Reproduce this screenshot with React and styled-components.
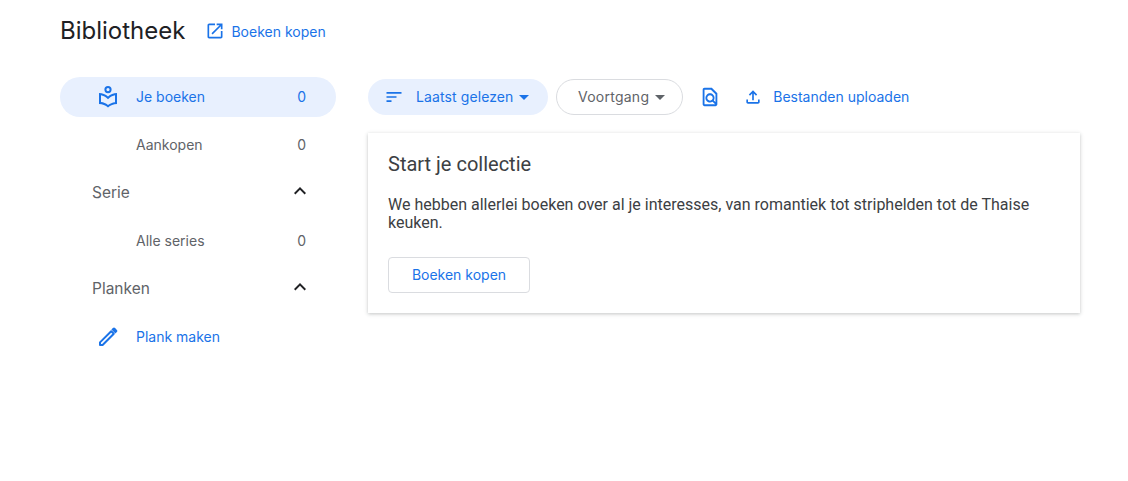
import React from "react";
import styled, { createGlobalStyle } from "styled-components";

const BLUE = "#1a73e8";
const TEXT = "#5f6368";

const GlobalStyle = createGlobalStyle`
  html, body {
    margin: 0;
    background: #fff;
    font-family: Inter, "Noto Sans", sans-serif;
  }
`;

const Icon = ({ size = 24, color = "currentColor", children }) => (
  <svg width={size} height={size} viewBox="0 0 24 24" fill={color}>
    {children}
  </svg>
);

const Caret = styled.span`
  width: 0;
  height: 0;
  border-left: 5px solid transparent;
  border-right: 5px solid transparent;
  border-top: 5px solid currentColor;
`;

const App = () => (
  <Page>
    <GlobalStyle />
    <Header>
      <Title>Bibliotheek</Title>
      <BuyLink>
        <Icon size={20}>
          <path d="M19 19H5V5h7V3H5c-1.11 0-2 .9-2 2v14c0 1.1.89 2 2 2h14c1.1 0 2-.9 2-2v-7h-2v7zM14 3v2h3.59l-9.83 9.83 1.41 1.41L19 6.41V10h2V3h-7z" />
        </Icon>
        Boeken kopen
      </BuyLink>
    </Header>
    <Columns>
      <Sidebar>
        <NavRow $active>
          <NavIcon>
            <Icon>
              <circle cx="12" cy="4.6" r="2.6" fill="none" stroke={BLUE} strokeWidth="2" />
              <path d="M12 11.55C9.64 9.35 6.48 8 3 8v11c3.48 0 6.64 1.35 9 3.55 2.36-2.19 5.52-3.55 9-3.55V8c-3.48 0-6.64 1.35-9 3.55zm7 5.58c-2.53.34-4.93 1.3-7 2.82-2.06-1.52-4.47-2.49-7-2.83v-6.95c2.1.38 4.05 1.35 5.64 2.83L12 14.28l1.36-1.27c1.59-1.48 3.54-2.45 5.64-2.83v6.95z" />
            </Icon>
          </NavIcon>
          <NavLabel>Je boeken</NavLabel>
          <Count>0</Count>
        </NavRow>
        <NavRow>
          <NavIcon />
          <NavLabel>Aankopen</NavLabel>
          <Count>0</Count>
        </NavRow>
        <SectionRow>
          <SectionLabel>Serie</SectionLabel>
          <Chevron />
        </SectionRow>
        <NavRow>
          <NavIcon />
          <NavLabel>Alle series</NavLabel>
          <Count>0</Count>
        </NavRow>
        <SectionRow>
          <SectionLabel>Planken</SectionLabel>
          <Chevron />
        </SectionRow>
        <NavRow $link>
          <NavIcon>
            <Icon>
              <path d="M4 20v-2.6L15.2 6.2l2.6 2.6L6.6 20z" fill="none" stroke={BLUE} strokeWidth="2" strokeLinejoin="round" />
              <path d="M15.4 4.6l1.5-1.5a1.6 1.6 0 0 1 2.2 0l1.8 1.8a1.6 1.6 0 0 1 0 2.2l-1.5 1.5z" />
            </Icon>
          </NavIcon>
          <NavLabel>Plank maken</NavLabel>
        </NavRow>
      </Sidebar>
      <Main>
        <Toolbar>
          <SortChip>
            <Icon size={20}>
              <path d="M3 18h6v-2H3v2zM3 6v2h18V6H3zm0 7h12v-2H3v2z" />
            </Icon>
            <ChipText>Laatst gelezen</ChipText>
            <Caret />
          </SortChip>
          <FilterChip>
            <FilterText>Voortgang</FilterText>
            <Caret />
          </FilterChip>
          <IconButton>
            <Icon size={22}>
              <path d="M14 2H6c-1.1 0-1.99.9-1.99 2L4 20c0 1.1.89 2 1.99 2H18c1.1 0 2-.9 2-2V8l-6-6zM6 4h7l5 5v8.58l-1.84-1.84c1.28-1.94 1.07-4.57-.64-6.28C14.55 8.49 13.28 8 12 8c-1.28 0-2.55.49-3.53 1.46-1.95 1.95-1.95 5.11 0 7.05.97.97 2.25 1.46 3.53 1.46.96 0 1.92-.28 2.75-.83L17.6 20H6V4zm8.11 11.1c-.56.56-1.31.88-2.11.88s-1.55-.31-2.11-.88c-.56-.56-.88-1.31-.88-2.11s.31-1.55.88-2.11c.56-.57 1.31-.88 2.11-.88s1.55.31 2.11.88c.56.56.88 1.31.88 2.11s-.31 1.55-.88 2.11z" />
            </Icon>
          </IconButton>
          <UploadLink>
            <Icon size={20}>
              <path d="M18 15v3H6v-3H4v3c0 1.1.9 2 2 2h12c1.1 0 2-.9 2-2v-3h-2zM7 9l1.41 1.41L11 7.83V16h2V7.83l2.59 2.58L17 9l-5-5-5 5z" />
            </Icon>
            <UploadText>Bestanden uploaden</UploadText>
          </UploadLink>
        </Toolbar>
        <Card>
          <CardTitle>Start je collectie</CardTitle>
          <CardBody>
            We hebben allerlei boeken over al je interesses, van romantiek tot striphelden tot de Thaise keuken.
          </CardBody>
          <CardButton>Boeken kopen</CardButton>
        </Card>
      </Main>
    </Columns>
  </Page>
);

const Chevron = () => (
  <ChevronBox>
    <Icon color="#202124">
      <path d="M12 8l-6 6 1.41 1.41L12 10.83l4.59 4.58L18 14z" />
    </Icon>
  </ChevronBox>
);

const Page = styled.div`
  padding: 0 48px 0 60px;
  height: 481px;
  box-sizing: border-box;
  overflow: hidden;
`;

const Header = styled.header`
  display: flex;
  align-items: center;
  gap: 20px;
  height: 60px;
`;

const Title = styled.h1`
  margin: 0;
  font-size: 24px;
  font-weight: 400;
  color: #202124;
`;

const BuyLink = styled.a`
  display: flex;
  align-items: center;
  gap: 6px;
  margin-top: 2px;
  font-size: 14px;
  color: ${BLUE};
`;

const Columns = styled.div`
  display: flex;
  gap: 32px;
  margin-top: 17px;
`;

const Sidebar = styled.nav`
  width: 276px;
  flex: none;
  display: flex;
  flex-direction: column;
  gap: 8px;
`;

const NavRow = styled.div`
  display: flex;
  align-items: center;
  height: 40px;
  padding: 0 30px 0 36px;
  border-radius: 20px;
  font-size: 14px;
  color: ${(p) => (p.$active || p.$link ? BLUE : TEXT)};
  background: ${(p) => (p.$active ? "#e8f0fe" : "transparent")};
`;

const NavIcon = styled.span`
  width: 24px;
  height: 24px;
  margin-right: 16px;
  flex: none;
`;

const NavLabel = styled.span`
  flex: 1;
  margin-bottom: 2px;
`;

const Count = styled.span`
  margin-bottom: 2px;
`;

const SectionRow = styled.div`
  display: flex;
  align-items: center;
  justify-content: space-between;
  height: 40px;
  padding: 0 24px 0 32px;
  font-size: 15.5px;
  color: ${TEXT};
`;

const SectionLabel = styled.span`
  margin-top: -2px;
`;

const ChevronBox = styled.span`
  display: flex;
  margin-top: -4px;
`;

const Main = styled.main`
  flex: 1;
  min-width: 0;
`;

const Toolbar = styled.div`
  display: flex;
  align-items: center;
  gap: 8px;
  height: 40px;
`;

const SortChip = styled.div`
  display: flex;
  align-items: center;
  height: 36px;
  width: 180px;
  box-sizing: border-box;
  padding: 0 18px 0 16px;
  border-radius: 18px;
  background: #e8f0fe;
  font-size: 14px;
  letter-spacing: 0.1px;
  color: ${BLUE};
`;

const ChipText = styled.span`
  margin: 0 6px 2px 12px;
`;

const FilterChip = styled.div`
  display: flex;
  align-items: center;
  gap: 6px;
  height: 34px;
  padding: 0 17px 0 21px;
  border: 1px solid #dadce0;
  border-radius: 18px;
  font-size: 14px;
  letter-spacing: 0.25px;
  color: ${TEXT};
`;

const FilterText = styled.span`
  margin-bottom: 2px;
`;

const IconButton = styled.div`
  display: flex;
  margin-left: 8px;
  color: ${BLUE};
`;

const UploadLink = styled.a`
  display: flex;
  align-items: center;
  gap: 10px;
  margin-left: 14px;
  font-size: 14px;
  color: ${BLUE};
`;

const UploadText = styled.span`
  margin-bottom: 2px;
`;

const Card = styled.section`
  margin-top: 16px;
  padding: 19px 20px 20px;
  height: 180px;
  box-sizing: border-box;
  background: #fff;
  box-shadow: 0 1px 3px rgba(60, 64, 67, 0.2), 0 1px 5px rgba(60, 64, 67, 0.12);
`;

const CardTitle = styled.h2`
  margin: 0;
  font-family: Roboto, sans-serif;
  font-size: 20px;
  line-height: 24px;
  font-weight: 400;
  color: #3c4043;
`;

const CardBody = styled.p`
  margin: 20px 0 0;
  font-family: Roboto, sans-serif;
  font-size: 16px;
  line-height: 18px;
  color: #3c4043;
`;

const CardButton = styled.button`
  display: block;
  margin-top: 25px;
  width: 142px;
  height: 36px;
  padding: 0 0 2px;
  background: #fff;
  border: 1px solid #dadce0;
  border-radius: 4px;
  font-family: Inter, sans-serif;
  font-size: 14px;
  color: ${BLUE};
`;

export default App;
